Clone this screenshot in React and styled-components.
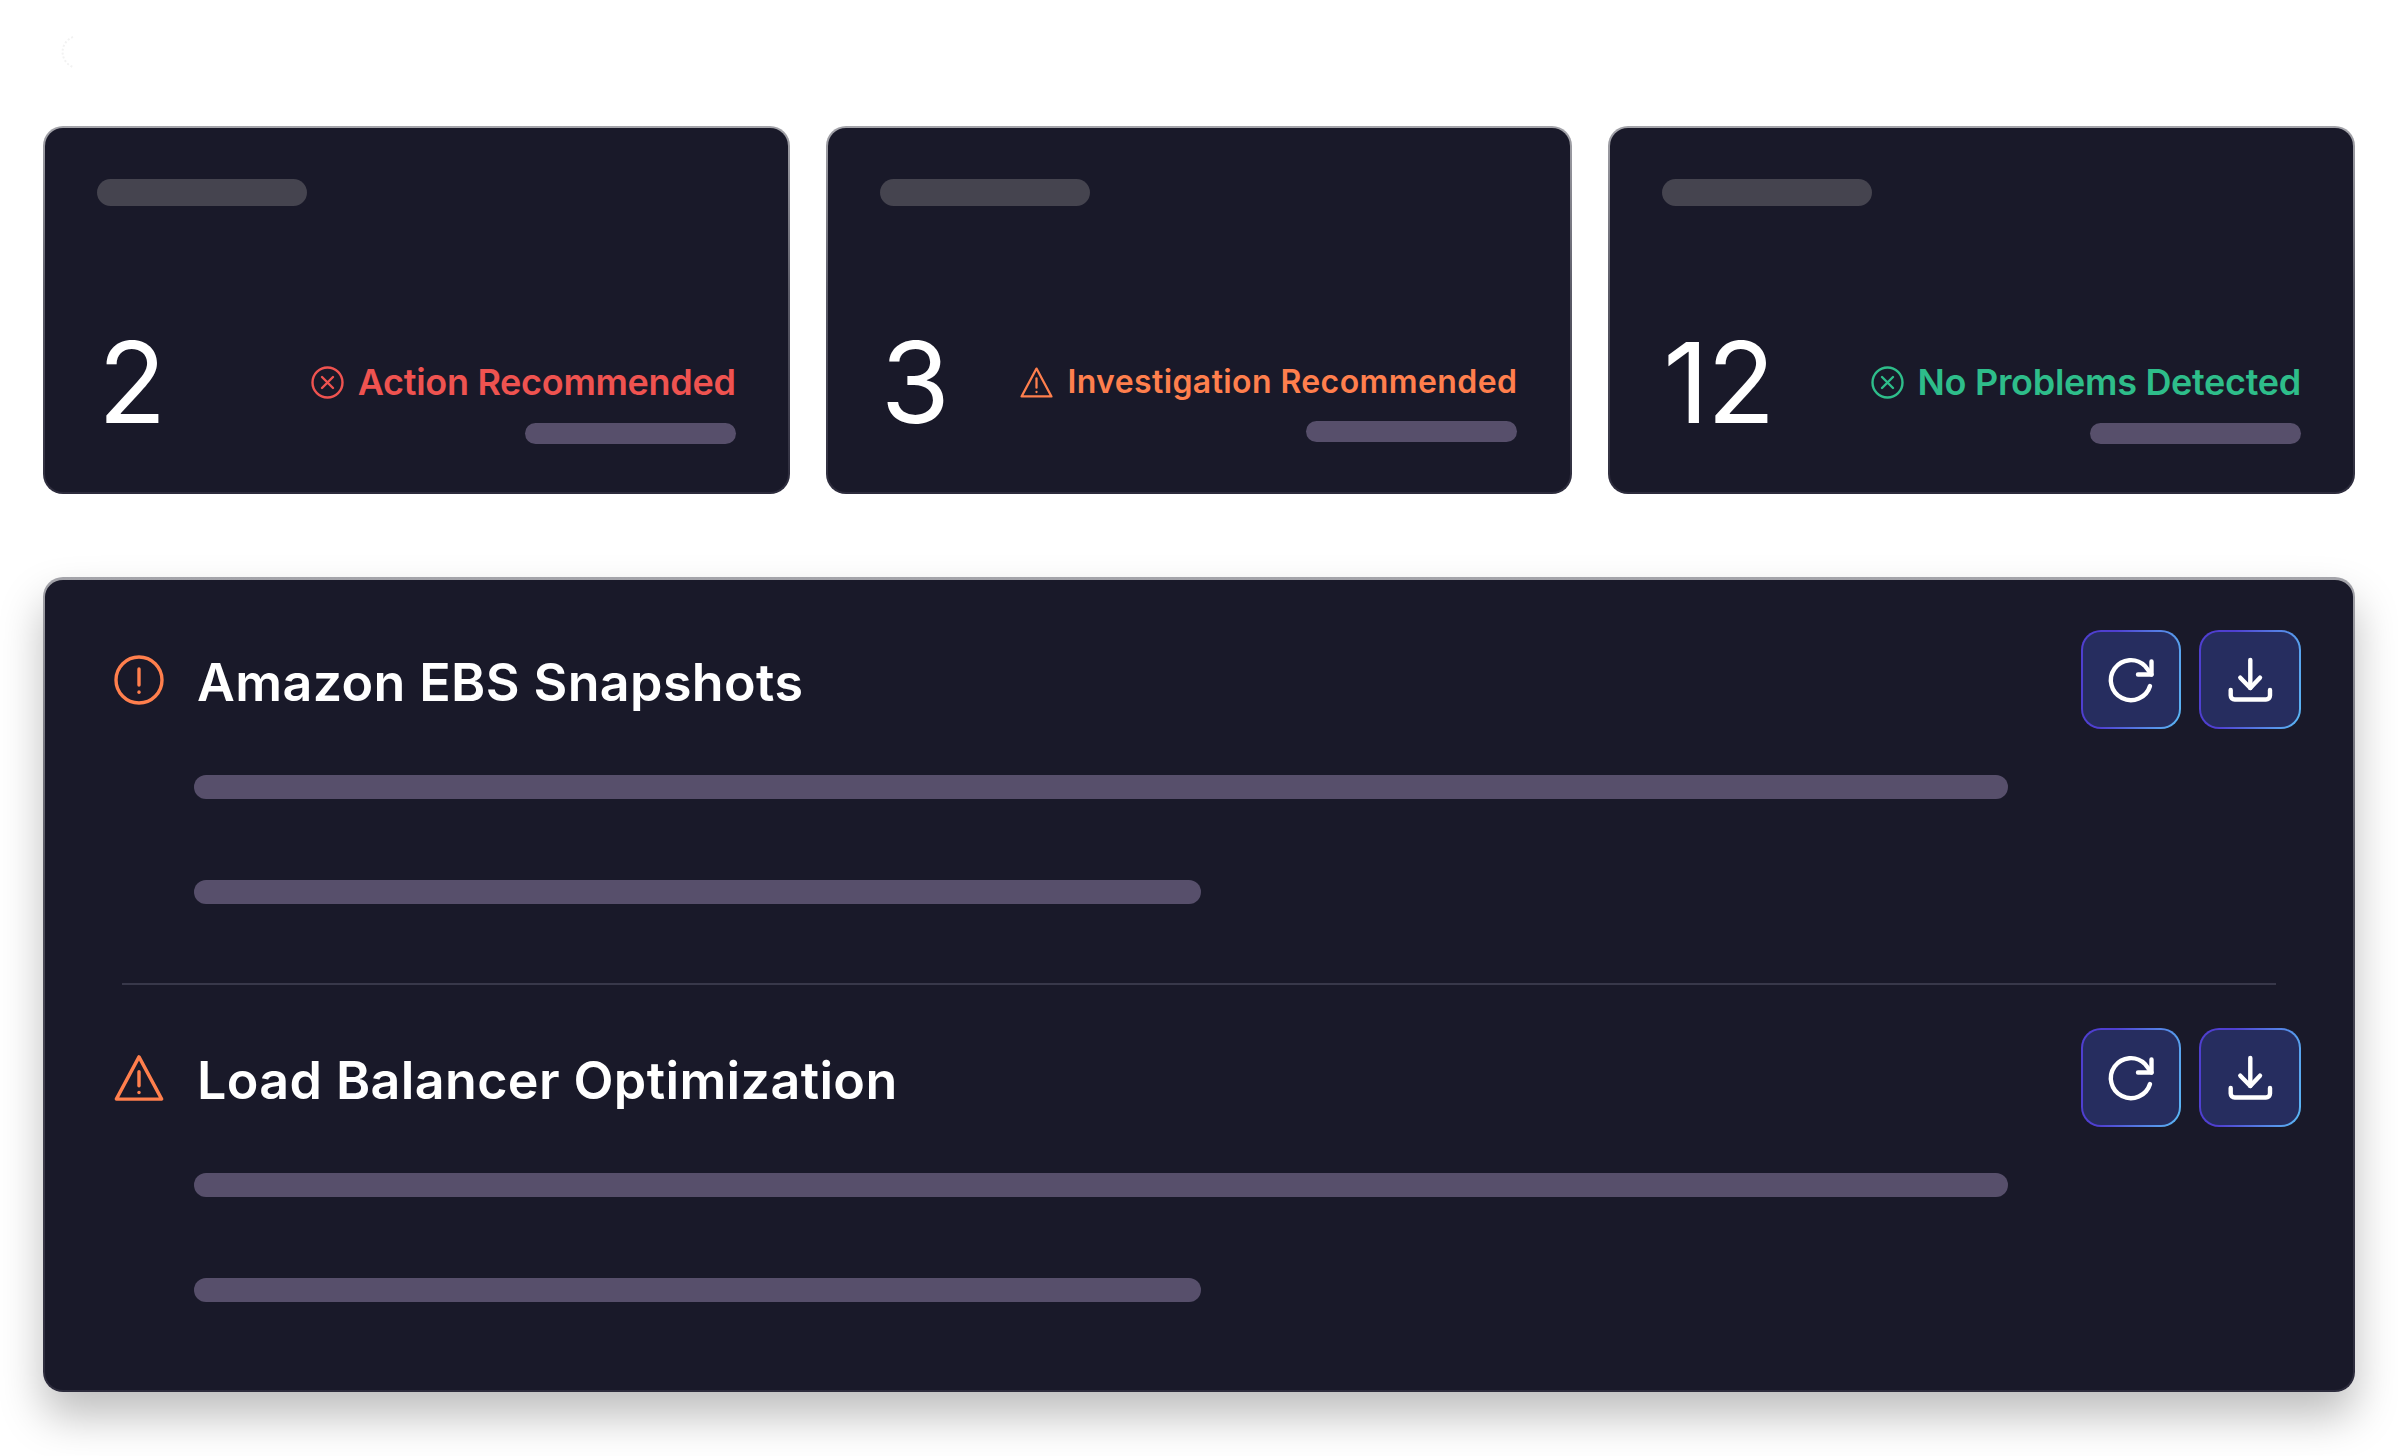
import styled, { createGlobalStyle } from 'styled-components'

const GlobalStyle = createGlobalStyle`
  * { box-sizing: border-box; }
  html, body { margin: 0; background: #fff; }
  body { font-family: Inter, "Liberation Sans", sans-serif; }
`

const tones = { red: '#ef5350', orange: '#ff7f4d', green: '#2ebd8a' }

const stats = [
  { value: '2', label: 'Action Recommended', tone: 'red', icon: 'cross' },
  { value: '3', label: 'Investigation Recommended', tone: 'orange', icon: 'warn', small: true },
  { value: '12', label: 'No Problems Detected', tone: 'green', icon: 'cross' },
]

const sections = [
  { title: 'Amazon EBS Snapshots', icon: 'alert' },
  { title: 'Load Balancer Optimization', icon: 'warn' },
]

const CrossIcon = () => (
  <svg width="33" height="33" viewBox="0 0 33 33" fill="none" stroke="currentColor" strokeWidth="2.4" strokeLinecap="round">
    <circle cx="16.5" cy="16.5" r="15" />
    <path d="M11 11l11 11M22 11l-11 11" />
  </svg>
)

const WarnIcon = ({ size }) => (
  <svg width={size} height={size} viewBox="0 0 32 32" fill="none" stroke="currentColor" strokeWidth="2.2" strokeLinecap="round" strokeLinejoin="round">
    <path d="M16 2.5L30.5 29.5H1.5Z" />
    <path d="M16 12v9" />
    <path d="M16 25.2v.1" />
  </svg>
)

const AlertIcon = () => (
  <svg width="50" height="50" viewBox="0 0 50 50" fill="none" stroke="currentColor" strokeWidth="3.4" strokeLinecap="round">
    <circle cx="25" cy="25" r="23" />
    <path d="M25 14v16" />
    <path d="M25 37v.2" />
  </svg>
)

const RefreshIcon = () => (
  <svg width="54" height="54" viewBox="0 0 54 54" fill="none" stroke="currentColor" strokeWidth="4.4" strokeLinecap="round" strokeLinejoin="round">
    <path d="M46 33A20 20 0 1 1 41 13L47.5 21.5" />
    <path d="M47.5 8.5V21.5H34" />
  </svg>
)

const DownloadIcon = () => (
  <svg width="54" height="54" viewBox="0 0 54 54" fill="none" stroke="currentColor" strokeWidth="4.4" strokeLinecap="round" strokeLinejoin="round">
    <path d="M27.3 7V35" />
    <path d="M17.3 24.7L27.3 35L37 24.7" />
    <path d="M7.7 37V42.5a4 4 0 0 0 4 4H43a4 4 0 0 0 4-4V37" />
  </svg>
)

const Page = styled.div`
  width: 2398px;
  height: 1456px;
  padding: 35px 43px 0;
  overflow: hidden;
  background: #fff;
`

const Spinner = styled.svg`
  display: block;
  width: 34px;
  height: 34px;
  margin: 0 0 57px 4px;
`

const StatRow = styled.div`
  display: grid;
  grid-template-columns: repeat(3, 1fr);
  gap: 36px;
  margin-bottom: 83px;
`

const StatCard = styled.div`
  height: 368px;
  padding: 51px 52px 48px;
  display: flex;
  flex-direction: column;
  justify-content: space-between;
  border: 2px solid transparent;
  border-radius: 20px;
  background:
    linear-gradient(#191929, #191929) padding-box,
    linear-gradient(180deg, #a4a4aa 0%, #5c5c68 45%, #2c2b3c 100%) border-box;
`

const TopPill = styled.div`
  width: 210px;
  height: 27px;
  border-radius: 14px;
  background: #45444f;
`

const StatBottom = styled.div`
  display: flex;
  justify-content: space-between;
  align-items: flex-end;
`

const StatValue = styled.div`
  font-size: 112px;
  font-weight: 400;
  line-height: 100px;
  letter-spacing: -2px;
  color: #fff;
  margin: 0 0 12px 1px;
`

const StatSide = styled.div`
  display: flex;
  flex-direction: column;
  align-items: flex-end;
  gap: ${p => (p.$small ? '19px' : '21px')};
  margin-bottom: ${p => (p.$small ? '2px' : '0')};
  margin-right: ${p => (p.$small ? '1px' : '0')};
`

const StatusLabel = styled.div`
  display: flex;
  align-items: center;
  gap: 14px;
  font-size: ${p => (p.$small ? '32px' : '36px')};
  font-weight: 600;
  letter-spacing: ${p => (p.$small ? '0.4px' : '-0.3px')};
  line-height: 40px;
  color: ${p => tones[p.$tone]};
`

const SideBar = styled.div`
  width: 211px;
  height: 21px;
  border-radius: 11px;
  background: #574f6b;
`

const Panel = styled.div`
  height: 815px;
  padding: 50px 52px 0;
  border: 2px solid transparent;
  border-top-width: 3px;
  border-radius: 20px;
  background:
    linear-gradient(#191929, #191929) padding-box,
    linear-gradient(180deg, #a4a4aa 0%, #4c4c58 40%, #2c2b3c 100%) border-box;
  box-shadow: 0 24px 44px rgba(0, 0, 0, 0.26);
`

const Section = styled.section``

const SectionHead = styled.div`
  display: flex;
  justify-content: space-between;
  align-items: center;
  margin-bottom: 46px;
`

const TitleWrap = styled.div`
  display: flex;
  align-items: center;
  gap: 33px;
  padding-left: 17px;
`

const TitleIcon = styled.span`
  display: flex;
  color: ${tones.orange};
`

const Title = styled.h2`
  margin: 0;
  padding-top: 7px;
  font-size: 52px;
  font-weight: 600;
  letter-spacing: 0.38px;
  line-height: 60px;
  color: #fff;
`

const Actions = styled.div`
  display: flex;
  gap: 18px;
`

const IconButton = styled.button`
  width: ${p => p.$w}px;
  height: 99px;
  padding: 0;
  display: flex;
  align-items: center;
  justify-content: center;
  color: #fff;
  border: 2.5px solid transparent;
  border-radius: 20px;
  background:
    linear-gradient(#262d5f, #262d5f) padding-box,
    linear-gradient(100deg, #4f3fd0 0%, #4f3fd0 30%, #5ab8f5 100%) border-box;
`

const Lines = styled.div`
  display: flex;
  flex-direction: column;
  gap: 81px;
  padding-left: 97px;
`

const Line = styled.div`
  width: ${p => p.$w}px;
  height: 24px;
  border-radius: 12px;
  background: #574f6b;
`

const Divider = styled.hr`
  margin: 79px 25px 43px;
  border: 0;
  height: 2px;
  background: #38384a;
`

export default function App() {
  return (
    <Page>
      <GlobalStyle />
      <Spinner viewBox="0 0 34 34" fill="none">
        <path d="M26 2A16 16 0 0 0 26 32" stroke="#f2f2f2" strokeWidth="2" strokeDasharray="2 2" />
      </Spinner>
      <StatRow>
        {stats.map(s => (
          <StatCard key={s.label}>
            <TopPill />
            <StatBottom>
              <StatValue>{s.value}</StatValue>
              <StatSide $small={s.small}>
                <StatusLabel $tone={s.tone} $small={s.small}>
                  {s.icon === 'warn' ? <WarnIcon size={33} /> : <CrossIcon />}
                  {s.label}
                </StatusLabel>
                <SideBar />
              </StatSide>
            </StatBottom>
          </StatCard>
        ))}
      </StatRow>
      <Panel>
        {sections.map((sec, i) => (
          <Section key={sec.title}>
            {i > 0 && <Divider />}
            <SectionHead>
              <TitleWrap>
                <TitleIcon>{sec.icon === 'alert' ? <AlertIcon /> : <WarnIcon size={50} />}</TitleIcon>
                <Title>{sec.title}</Title>
              </TitleWrap>
              <Actions>
                <IconButton $w={100}><RefreshIcon /></IconButton>
                <IconButton $w={102}><DownloadIcon /></IconButton>
              </Actions>
            </SectionHead>
            <Lines>
              <Line $w={1814} />
              <Line $w={1007} />
            </Lines>
          </Section>
        ))}
      </Panel>
    </Page>
  )
}
